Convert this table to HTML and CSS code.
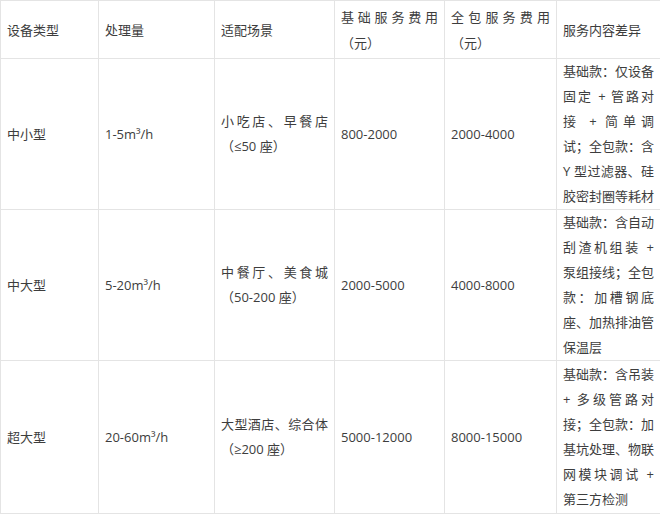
FILE: index.html
```html
<!DOCTYPE html>
<html lang="zh-CN">
<head>
<meta charset="utf-8">
<title>设备服务费用</title>
<link rel="stylesheet" href="styles.css">
</head>
<body>
<table class="grid">
  <colgroup>
    <col class="c1"><col class="c2"><col class="c3"><col class="c4"><col class="c5"><col class="c6">
  </colgroup>
  <thead>
    <tr class="head">
      <td>设备类型</td>
      <td>处理量</td>
      <td>适配场景</td>
      <td class="just">基础服务费用（元）</td>
      <td class="just">全包服务费用（元）</td>
      <td>服务内容差异</td>
    </tr>
  </thead>
  <tbody>
    <tr>
      <td>中小型</td>
      <td>1-5m³/h</td>
      <td class="just">小吃店、早餐店（≤50 座）</td>
      <td>800-2000</td>
      <td>2000-4000</td>
      <td class="svc">
        <span class="ln">基础款：仅设备</span>
        <span class="ln">固定 + 管路对</span>
        <span class="ln">接 + 简单调</span>
        <span class="ln">试；全包款：含</span>
        <span class="ln">Y 型过滤器、硅</span>
        <span class="ln">胶密封圈等耗材</span>
      </td>
    </tr>
    <tr>
      <td>中大型</td>
      <td>5-20m³/h</td>
      <td class="just">中餐厅、美食城（50-200 座）</td>
      <td>2000-5000</td>
      <td>4000-8000</td>
      <td class="svc">
        <span class="ln">基础款：含自动</span>
        <span class="ln">刮渣机组装 +</span>
        <span class="ln">泵组接线；全包</span>
        <span class="ln">款：加槽钢底</span>
        <span class="ln">座、加热排油管</span>
        <span class="ln last">保温层</span>
      </td>
    </tr>
    <tr>
      <td>超大型</td>
      <td>20-60m³/h</td>
      <td class="just">大型酒店、综合体（≥200 座）</td>
      <td>5000-12000</td>
      <td>8000-15000</td>
      <td class="svc">
        <span class="ln">基础款：含吊装</span>
        <span class="ln">+ 多级管路对</span>
        <span class="ln">接；全包款：加</span>
        <span class="ln">基坑处理、物联</span>
        <span class="ln">网模块调试 +</span>
        <span class="ln last">第三方检测</span>
      </td>
    </tr>
  </tbody>
</table>
</body>
</html>
```

FILE: styles.css
```css
html, body {
  margin: 0;
  padding: 0;
  background: #ffffff;
}

body {
  font-family: "Open Sans", "DejaVu Sans", "Noto Sans CJK SC", sans-serif;
  font-size: 13px;
  color: #3d3d3d;
}

.grid {
  border-collapse: collapse;
  table-layout: fixed;
  width: 660px;
}

.c1 { width: 98px; }
.c2 { width: 116px; }
.c3 { width: 120px; }
.c4 { width: 110px; }
.c5 { width: 112px; }
.c6 { width: 104px; }

.grid td {
  border: 1px solid #e4e4e4;
  padding: 0 6px;
  line-height: 25px;
  vertical-align: middle;
  text-align: left;
  word-break: normal;
}

.head td {
  height: 57px;
  line-height: 26px;
}

.grid tbody tr:last-child td {
  height: 152px;
}

.just {
  text-align: justify !important;
}

.svc .ln {
  display: block;
  text-align: justify;
  text-align-last: justify;
  white-space: nowrap;
}

.svc .ln.last {
  text-align-last: left;
}
```
